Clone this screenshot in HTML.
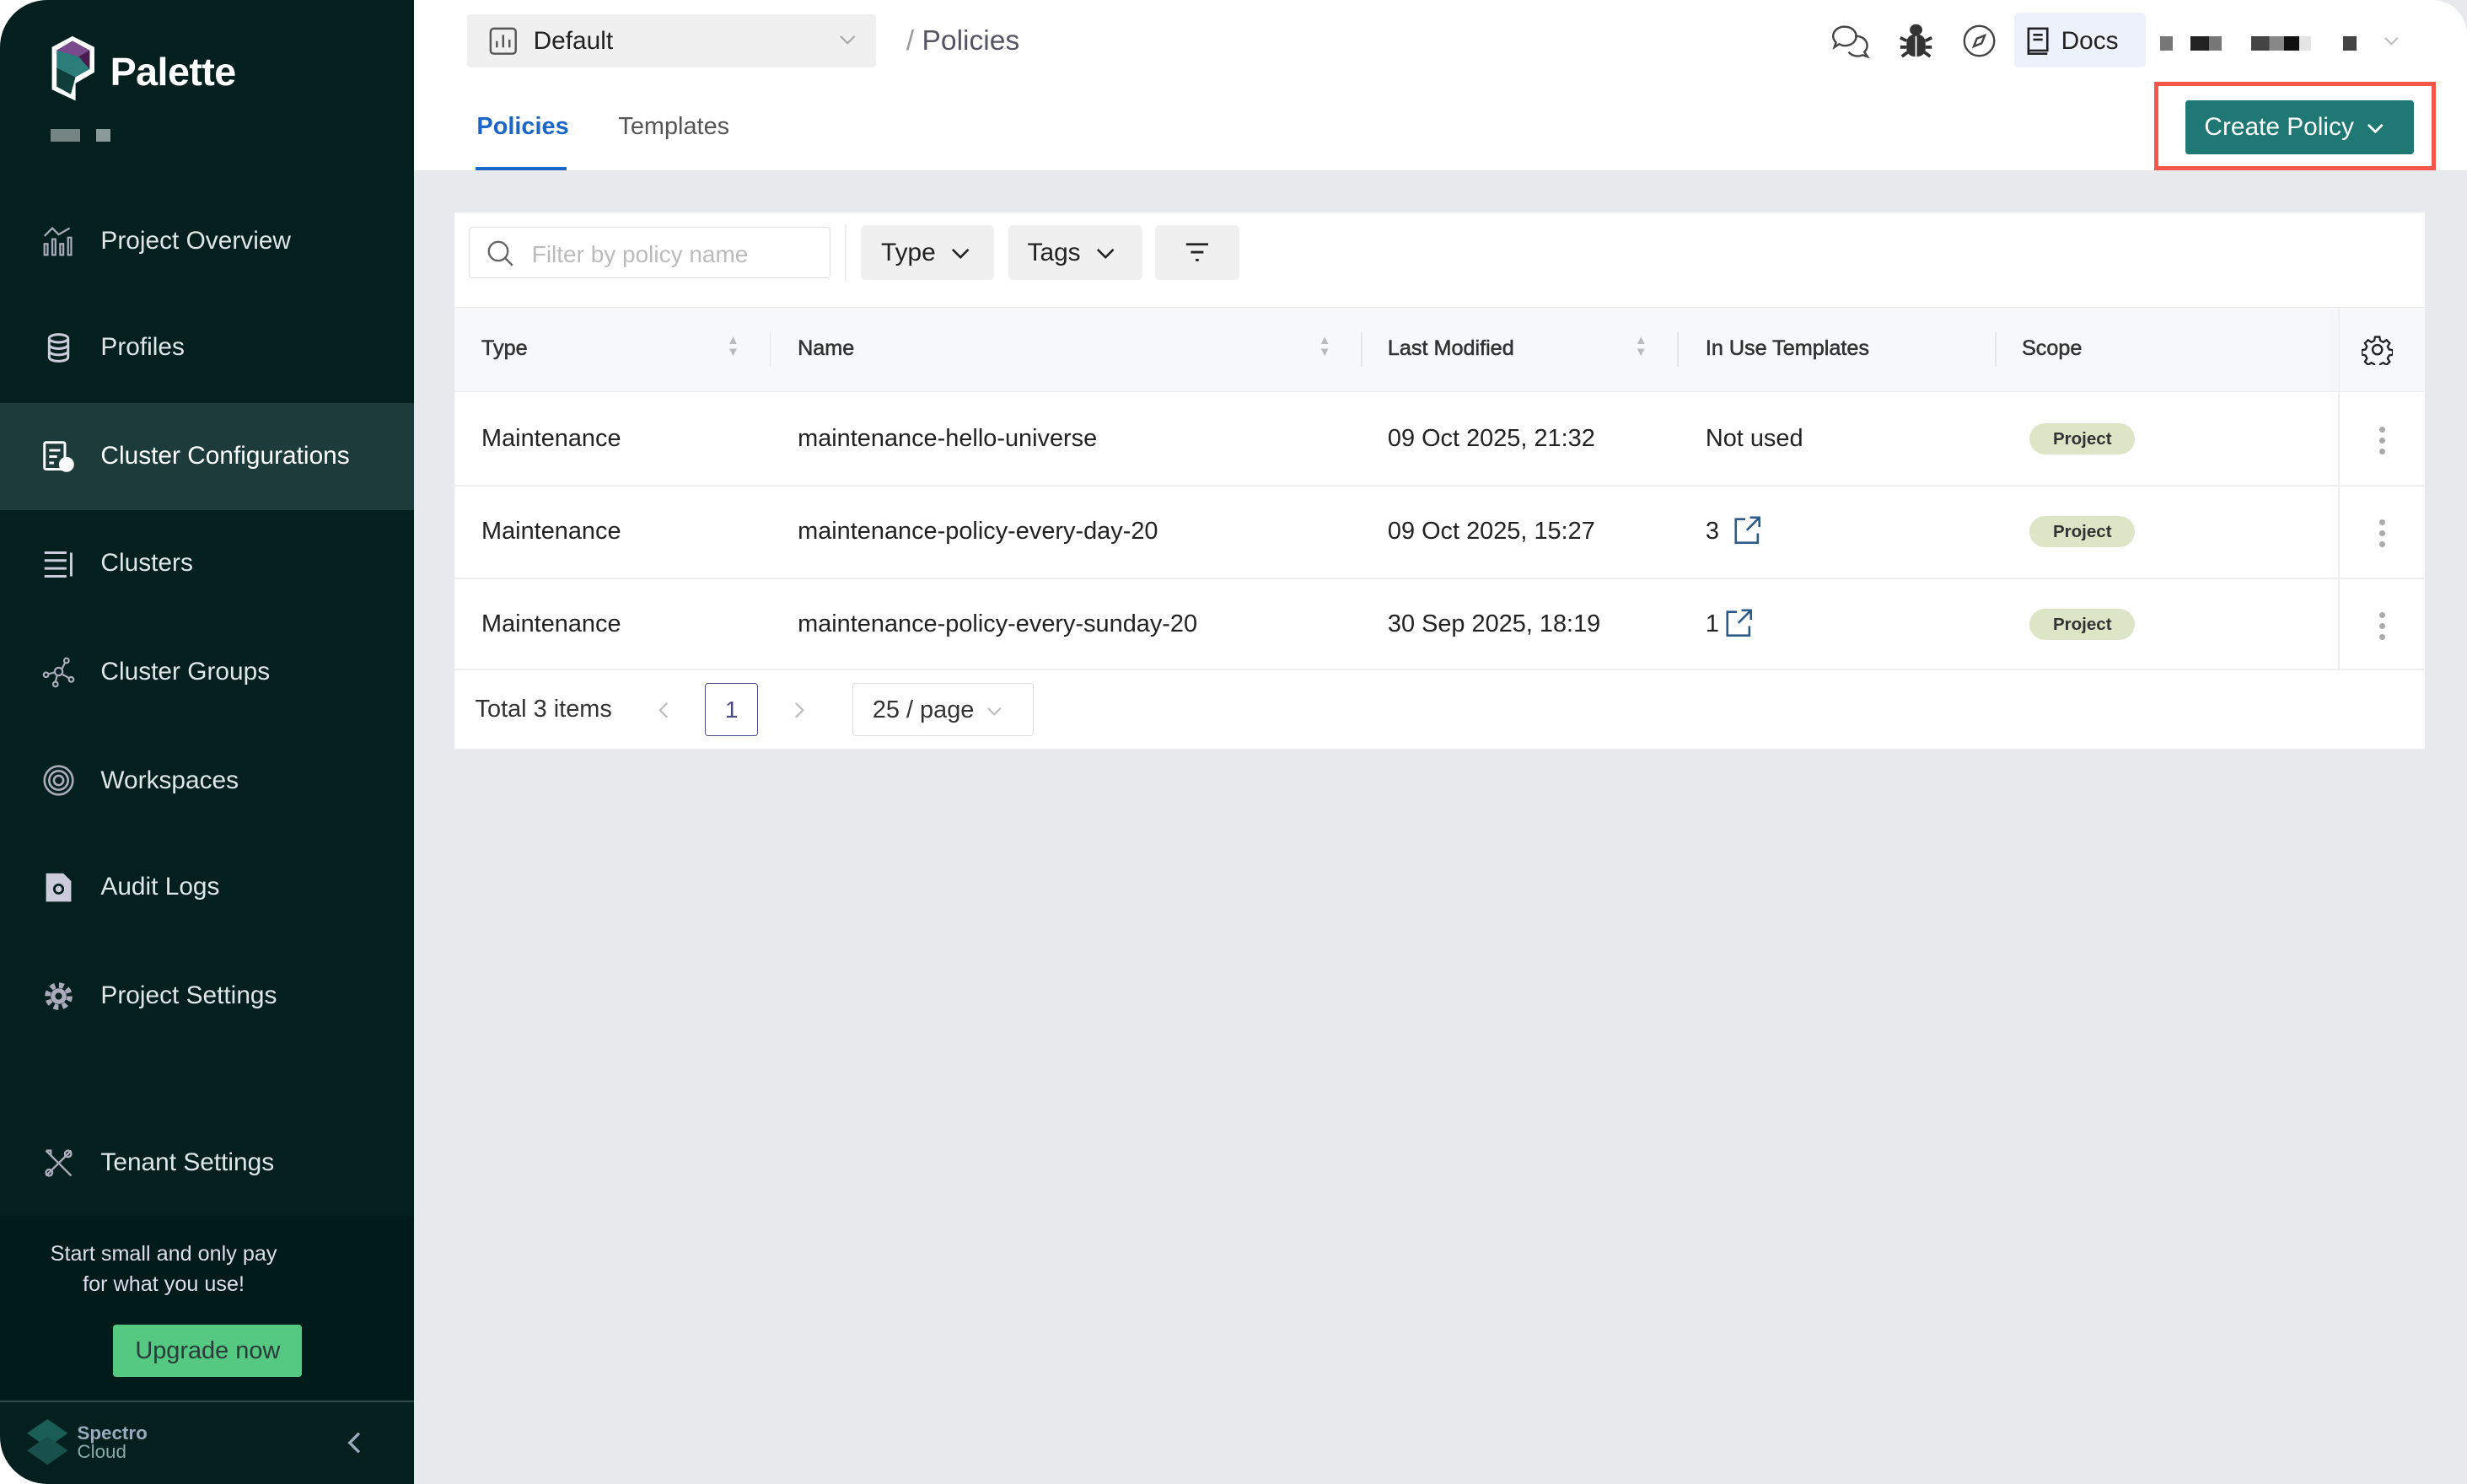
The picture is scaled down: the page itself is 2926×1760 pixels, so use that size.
<!DOCTYPE html>
<html><head><meta charset="utf-8"><style>
html,body{margin:0;padding:0;width:2926px;height:1760px;overflow:hidden;background:#fff}
#r{zoom:1.8661;width:1568px;height:943px;position:relative;font-family:"Liberation Sans",sans-serif;color:#222;}
.a{position:absolute}
#sb{left:0;top:0;width:263px;height:943px;background:#03201f;border-radius:30px 0 0 30px;overflow:hidden}
.nv{position:absolute;left:0;width:263px;height:68px;display:flex;align-items:center;color:#dfe6e6;font-size:16px}
.nv svg{position:absolute;left:26px}
.nv span{position:absolute;left:64px}
#main{left:263px;top:0;width:1305px;height:943px;background:#e8e9ec}
#hd{left:263px;top:0;width:1305px;height:108px;background:#fff;border-radius:0 22px 0 0}
.th{position:absolute;top:214px;font-size:13.5px;color:#333;-webkit-text-stroke:.3px #333}
.td{position:absolute;font-size:15.5px;color:#222;top:0;white-space:nowrap}
.pill{position:absolute;left:1290px;width:67px;height:20px;border-radius:10px;background:#dde5c7;font-size:11px;font-weight:bold;text-align:center;line-height:20px;color:#333}
.dots{position:absolute;left:1512px;width:4px}
.dots i{display:block;width:4px;height:4px;border-radius:2px;background:#aaa;margin-bottom:3px}
.chev{display:inline-block;vertical-align:middle;margin-left:8px}
</style></head><body><div id="r">
<div id="main" class="a"></div>
<div id="hd" class="a"></div>
<div id="sb" class="a">
 <svg class="a" style="left:30px;top:22px" width="32" height="44" viewBox="0 0 32 44"><path d="M3 8 L16 1 L30 8 L30 24 L18 31 L18 42 L3 35 Z" fill="#fff"/><path d="M6 10 L16 4 L27 10 L27 22 L18 27 L6 21 Z" fill="#2a7d78"/><path d="M6 10 L16 4 L27 10 L20 14 L6 10Z" fill="#7b4a8c"/><path d="M20 14 L27 10 L27 22 Z" fill="#4b1a4e"/><path d="M6 21 L18 27 L15 38 L6 33 Z" fill="#0f3d3a"/></svg>
 <div class="a" style="left:70px;top:31px;font-size:25px;font-weight:bold;color:#fff;letter-spacing:-.3px">Palette</div>
 <div class="a" style="left:32px;top:82px;width:19px;height:8px;background:#758584"></div>
 <div class="a" style="left:61px;top:82px;width:9px;height:8px;background:#8a9a98"></div>
 <div class="nv" style="top:119px"><svg width="22" height="22" viewBox="0 0 22 22" fill="none" stroke="#aab" stroke-width="1.2"><path d="M2 8 L7 3 L11 7 L18 3"/><rect x="2" y="13" width="2" height="7"/><rect x="7" y="10" width="2" height="10"/><rect x="12" y="13" width="2" height="7"/><rect x="17" y="9" width="2" height="11"/></svg><span>Project Overview</span></div>
 <div class="nv" style="top:187px"><svg width="22" height="22" viewBox="0 0 22 22" fill="none" stroke="#ccd" stroke-width="1.6"><ellipse cx="11" cy="5" rx="6" ry="2.5"/><path d="M5 5v12c0 1.5 3 2.5 6 2.5s6-1 6-2.5V5M5 9c0 1.5 3 2.5 6 2.5s6-1 6-2.5M5 13c0 1.5 3 2.5 6 2.5s6-1 6-2.5"/></svg><span>Profiles</span></div>
 <div class="nv" style="top:256px;background:#1d3b3b;color:#fff"><svg width="22" height="22" viewBox="0 0 22 22" fill="none" stroke="#fff" stroke-width="1.6"><rect x="2" y="2" width="13" height="17" rx="1"/><path d="M5 7h7M5 11h5M5 15h3"/><circle cx="16" cy="16" r="4" fill="#fff"/></svg><span>Cluster Configurations</span></div>
 <div class="nv" style="top:324px"><svg width="22" height="22" viewBox="0 0 22 22" fill="none" stroke="#ccd" stroke-width="1.6"><path d="M2 4h14M2 9h14M2 14h14M2 19h14M19 4v15"/></svg><span>Clusters</span></div>
 <div class="nv" style="top:393px"><svg width="22" height="22" viewBox="0 0 22 22" fill="none" stroke="#aab" stroke-width="1.2"><circle cx="11" cy="11" r="2.5"/><circle cx="3" cy="13" r="1.5"/><circle cx="16" cy="4" r="1.5"/><circle cx="19" cy="16" r="1.5"/><circle cx="9" cy="19" r="1.5"/><path d="M4.5 12.5L8.5 11.5M13 9.5L15 5.5M13 12.5L17.5 15M10 13.5L9 17.5"/></svg><span>Cluster Groups</span></div>
 <div class="nv" style="top:462px"><svg width="22" height="22" viewBox="0 0 22 22" fill="none" stroke="#aab" stroke-width="1.4"><circle cx="11" cy="11" r="9"/><circle cx="11" cy="11" r="6"/><circle cx="11" cy="11" r="3"/></svg><span>Workspaces</span></div>
 <div class="nv" style="top:530px"><svg width="22" height="22" viewBox="0 0 22 22" fill="#ccd"><path d="M3 2h11l5 5v13H3z"/><circle cx="11" cy="12" r="3.5" fill="#03201f"/><circle cx="11" cy="12" r="2" fill="#ccd"/></svg><span>Audit Logs</span></div>
 <div class="nv" style="top:599px"><svg width="22" height="22" viewBox="0 0 22 22"><circle cx="11" cy="11" r="7" fill="none" stroke="#aab" stroke-width="3.5" stroke-dasharray="3 2.5"/><circle cx="11" cy="11" r="5" fill="#aab"/><circle cx="11" cy="11" r="2.2" fill="#03201f"/></svg><span>Project Settings</span></div>
 <div class="nv" style="top:705px"><svg width="22" height="22" viewBox="0 0 22 22" fill="none" stroke="#aab" stroke-width="1.3"><path d="M3 3l16 16M19 3L3 19M3 3l3 0 0 3M16 16l3 3"/><circle cx="5" cy="17" r="2"/><circle cx="17" cy="5" r="2"/></svg><span>Tenant Settings</span></div>
 <div class="a" style="left:0;top:773px;width:263px;height:117px;background:#011b1a"></div>
 <div class="a" style="left:0;top:787px;width:208px;text-align:center;font-size:13.5px;line-height:19.5px;color:#dde">Start small and only pay<br>for what you use!</div>
 <div class="a" style="left:72px;top:842px;width:120px;height:33px;background:#55c882;border-radius:2px;color:#2b3a3a;font-size:15.5px;text-align:center;line-height:34px">Upgrade now</div>
 <div class="a" style="left:0;top:890px;width:263px;height:1px;background:#2e4a4a"></div>
 <svg class="a" style="left:17px;top:902px" width="26" height="30" viewBox="0 0 26 30"><path d="M13 0L26 9 13 18 0 9Z" fill="#1b5e56"/><path d="M13 11L26 20 13 29 0 20Z" fill="#18514b"/></svg>
 <div class="a" style="left:49px;top:905px;font-size:12px;line-height:12px;color:#8aa"><b style="color:#9ab">Spectro</b><br>Cloud</div>
 <svg class="a" style="left:220px;top:910px" width="10" height="14" viewBox="0 0 10 14" fill="none" stroke="#9ab" stroke-width="1.8"><path d="M8 1L2 7l6 6"/></svg>
</div>
<!-- header -->
<div class="a" style="left:297px;top:9px;width:260px;height:34px;background:#f0f0f1;border-radius:2px"></div>
<svg class="a" style="left:311px;top:17px" width="18" height="18" viewBox="0 0 18 18" fill="none" stroke="#555" stroke-width="1.3"><rect x="1" y="1" width="16" height="16" rx="2"/><path d="M5 13V9M9 13V5M13 13V8"/></svg>
<div class="a" style="left:339px;top:17px;font-size:16px;color:#222">Default</div>
<svg class="a" style="left:533px;top:22px" width="11" height="7" viewBox="0 0 11 7" fill="none" stroke="#aaa" stroke-width="1.2"><path d="M1 1l4.5 4.5L10 1"/></svg>
<div class="a" style="left:576px;top:16px;font-size:18px;color:#999">/ <span style="color:#556">Policies</span></div>
<svg class="a" style="left:1164px;top:15px" width="26" height="22" viewBox="0 0 26 22" fill="none" stroke="#444" stroke-width="1.3"><path d="M9 2a7 6 0 1 1-4 11l-3 2 1-3a7 6 0 0 1 6-10z"/><path d="M15 8a7 6 0 0 1 6 10l2 3-3-1a7 6 0 0 1-9-2"/></svg>
<svg class="a" style="left:1207px;top:14px" width="22" height="24" viewBox="0 0 22 24" fill="#333"><ellipse cx="11" cy="5" rx="4" ry="3.5"/><rect x="5" y="8" width="12" height="14" rx="5"/><path d="M1 10l4 2M21 10l-4 2M1 16h4M21 16h-4M2 22l4-3M20 22l-4-3" stroke="#333" stroke-width="2"/><path d="M11 9v13" stroke="#fff" stroke-width="1"/></svg>
<svg class="a" style="left:1247px;top:15px" width="22" height="22" viewBox="0 0 22 22" fill="none" stroke="#444" stroke-width="1.3"><circle cx="11" cy="11" r="9.5"/><path d="M14.5 7.5L12.5 12.5 7.5 14.5 9.5 9.5Z"/></svg>
<div class="a" style="left:1280px;top:8px;width:84px;height:35px;background:#edf1fb;border-radius:3px"></div>
<svg class="a" style="left:1288px;top:17px" width="14" height="18" viewBox="0 0 14 18" fill="none" stroke="#222" stroke-width="1.4"><rect x="1" y="1" width="12" height="14"/><path d="M1 15v2h12M4 5h6M4 8h6"/></svg>
<div class="a" style="left:1310px;top:17px;font-size:16px;color:#222">Docs</div>
<div class="a" style="left:1373px;top:23px;width:8px;height:9px;background:#777"></div>
<div class="a" style="left:1392px;top:23px;width:12px;height:9px;background:#222"></div><div class="a" style="left:1404px;top:23px;width:8px;height:9px;background:#777"></div>
<div class="a" style="left:1431px;top:23px;width:38px;height:9px;background:linear-gradient(90deg,#444 0 30%,#888 30% 55%,#111 55% 80%,#e5e5e5 80%)"></div>
<div class="a" style="left:1489px;top:23px;width:9px;height:9px;background:#444"></div>
<svg class="a" style="left:1515px;top:23px" width="10" height="7" viewBox="0 0 10 7" fill="none" stroke="#bbb" stroke-width="1.1"><path d="M1 1l4 4 4-4"/></svg>
<div class="a" style="left:303px;top:72px;font-size:15.5px;color:#1b66c9;font-weight:bold">Policies</div>
<div class="a" style="left:302px;top:106px;width:58px;height:2px;background:#1b66c9"></div>
<div class="a" style="left:393px;top:72px;font-size:15.5px;color:#555">Templates</div>
<div class="a" style="left:1370px;top:53px;width:174px;height:51px;border:3px solid #f4574a;box-sizing:content-box;margin:-1px"></div>
<div class="a" style="left:1389px;top:64px;width:145px;height:34px;background:#1f7873;border-radius:2px;color:#fff;font-size:16px;line-height:34px;padding-left:12px;box-sizing:border-box">Create Policy<svg class="chev" width="11" height="7" viewBox="0 0 11 7" fill="none" stroke="#fff" stroke-width="1.5"><path d="M1 1l4.5 4.5L10 1"/></svg></div>
<!-- card -->
<div class="a" style="left:289px;top:135px;width:1252px;height:341px;background:#fff"></div>
<div class="a" style="left:298px;top:144px;width:230px;height:33px;border:1px solid #ddd;box-sizing:border-box;border-radius:2px"></div>
<svg class="a" style="left:309px;top:152px" width="18" height="18" viewBox="0 0 18 18" fill="none" stroke="#666" stroke-width="1.3"><circle cx="7.5" cy="7.5" r="6"/><path d="M12 12l4.5 4.5"/></svg>
<div class="a" style="left:338px;top:153px;font-size:15px;color:#bbb">Filter by policy name</div>
<div class="a" style="left:537px;top:143px;width:1px;height:36px;background:#eee"></div>
<div class="a" style="left:547px;top:143px;width:85px;height:35px;background:#f0f0f1;border-radius:3px;font-size:16px;line-height:35px;padding-left:13px;box-sizing:border-box">Type<svg class="chev" style="margin-left:10px" width="12" height="7" viewBox="0 0 12 7" fill="none" stroke="#222" stroke-width="1.4"><path d="M1 1l5 5 5-5"/></svg></div>
<div class="a" style="left:641px;top:143px;width:85px;height:35px;background:#f0f0f1;border-radius:3px;font-size:16px;line-height:35px;padding-left:12px;box-sizing:border-box">Tags<svg class="chev" style="margin-left:10px" width="12" height="7" viewBox="0 0 12 7" fill="none" stroke="#222" stroke-width="1.4"><path d="M1 1l5 5 5-5"/></svg></div>
<div class="a" style="left:734px;top:143px;width:54px;height:35px;background:#f0f0f1;border-radius:3px"></div>
<svg class="a" style="left:753px;top:153px" width="16" height="14" viewBox="0 0 16 14" stroke="#222" stroke-width="1.5"><path d="M1 2h14M4 7h8M7 12h2"/></svg>
<div class="a" style="left:289px;top:195px;width:1252px;height:53px;background:#f7f8f9;border-top:1px solid #e6e6e6;border-bottom:1px solid #ececec"></div>
<div class="th" style="left:306px">Type</div><div class="th" style="left:507px">Name</div><div class="th" style="left:882px">Last Modified</div><div class="th" style="left:1084px">In Use Templates</div><div class="th" style="left:1285px">Scope</div>
<div class="a" style="left:462px;top:213px;font-size:8px;line-height:7px;color:#bbb">&#9650;<br>&#9660;</div>
<div class="a" style="left:838px;top:213px;font-size:8px;line-height:7px;color:#bbb">&#9650;<br>&#9660;</div>
<div class="a" style="left:1039px;top:213px;font-size:8px;line-height:7px;color:#bbb">&#9650;<br>&#9660;</div>
<div class="a" style="left:489px;top:211px;width:1px;height:22px;background:#e5e5e5"></div>
<div class="a" style="left:865px;top:211px;width:1px;height:22px;background:#e5e5e5"></div>
<div class="a" style="left:1066px;top:211px;width:1px;height:22px;background:#e5e5e5"></div>
<div class="a" style="left:1268px;top:211px;width:1px;height:22px;background:#e5e5e5"></div>
<div class="a" style="left:1486px;top:196px;width:1px;height:230px;background:#eee;box-shadow:-3px 0 4px rgba(0,0,0,.05)"></div>
<svg class="a" style="left:1501px;top:212px" width="20" height="20" viewBox="0 0 20 20" fill="none" stroke="#222" stroke-width="1.3"><path d="M8.5 1.5h3l.5 2.5 2 1 2.2-1.4 2.1 2.1-1.4 2.2 1 2 2.5.5v3l-2.5.5-1 2 1.4 2.2-2.1 2.1-2.2-1.4-2 1-.5 2.5h-3l-.5-2.5-2-1-2.2 1.4-2.1-2.1 1.4-2.2-1-2-2.5-.5v-3l2.5-.5 1-2-1.4-2.2 2.1-2.1 2.2 1.4 2-1z" transform="scale(.95) translate(.5 .5)"/><circle cx="10" cy="10" r="3"/></svg>
<!-- rows -->
<div class="a" style="left:289px;top:308px;width:1252px;height:1px;background:#eee"></div>
<div class="a" style="left:289px;top:367px;width:1252px;height:1px;background:#eee"></div>
<div class="a" style="left:289px;top:425px;width:1252px;height:1px;background:#eee"></div>
<div class="a" style="left:0;top:270px"><div class="td" style="left:306px">Maintenance</div><div class="td" style="left:507px">maintenance-hello-universe</div><div class="td" style="left:882px">09 Oct 2025, 21:32</div><div class="td" style="left:1084px">Not used</div></div>
<div class="a" style="left:0;top:329px"><div class="td" style="left:306px">Maintenance</div><div class="td" style="left:507px">maintenance-policy-every-day-20</div><div class="td" style="left:882px">09 Oct 2025, 15:27</div><div class="td" style="left:1084px">3</div></div>
<div class="a" style="left:0;top:388px"><div class="td" style="left:306px">Maintenance</div><div class="td" style="left:507px">maintenance-policy-every-sunday-20</div><div class="td" style="left:882px">30 Sep 2025, 18:19</div><div class="td" style="left:1084px">1</div></div>
<div class="pill" style="top:269px">Project</div><div class="pill" style="top:328px">Project</div><div class="pill" style="top:387px">Project</div>
<svg class="a" style="left:1101px;top:328px" width="18" height="18" viewBox="0 0 18 18" fill="none" stroke="#2b5b8a" stroke-width="1.4"><path d="M8 2H2v15h14v-6M11 1h6v6M17 1L9 9"/></svg>
<svg class="a" style="left:1096px;top:387px" width="18" height="18" viewBox="0 0 18 18" fill="none" stroke="#2b5b8a" stroke-width="1.4"><path d="M8 2H2v15h14v-6M11 1h6v6M17 1L9 9"/></svg>
<div class="dots" style="top:271px"><i></i><i></i><i></i></div>
<div class="dots" style="top:330px"><i></i><i></i><i></i></div>
<div class="dots" style="top:389px"><i></i><i></i><i></i></div>
<div class="a" style="left:302px;top:442px;font-size:15.5px;color:#333">Total 3 items</div>
<svg class="a" style="left:418px;top:446px" width="7" height="11" viewBox="0 0 7 11" fill="none" stroke="#bbb" stroke-width="1.2"><path d="M6 1L1.5 5.5 6 10"/></svg>
<div class="a" style="left:448px;top:434px;width:34px;height:34px;border:1px solid #4a4a8a;box-sizing:border-box;border-radius:2px;text-align:center;line-height:33px;color:#4a4a8a;font-size:15px">1</div>
<svg class="a" style="left:505px;top:446px" width="7" height="11" viewBox="0 0 7 11" fill="none" stroke="#bbb" stroke-width="1.2"><path d="M1 1l4.5 4.5L1 10"/></svg>
<div class="a" style="left:542px;top:434px;width:115px;height:34px;border:1px solid #ddd;box-sizing:border-box;border-radius:2px;font-size:15.5px;line-height:34px;padding-left:12px;color:#333">25 / page<svg class="chev" width="10" height="6" viewBox="0 0 10 6" fill="none" stroke="#bbb" stroke-width="1.1"><path d="M1 1l4 4 4-4"/></svg></div>
</div></body></html>
